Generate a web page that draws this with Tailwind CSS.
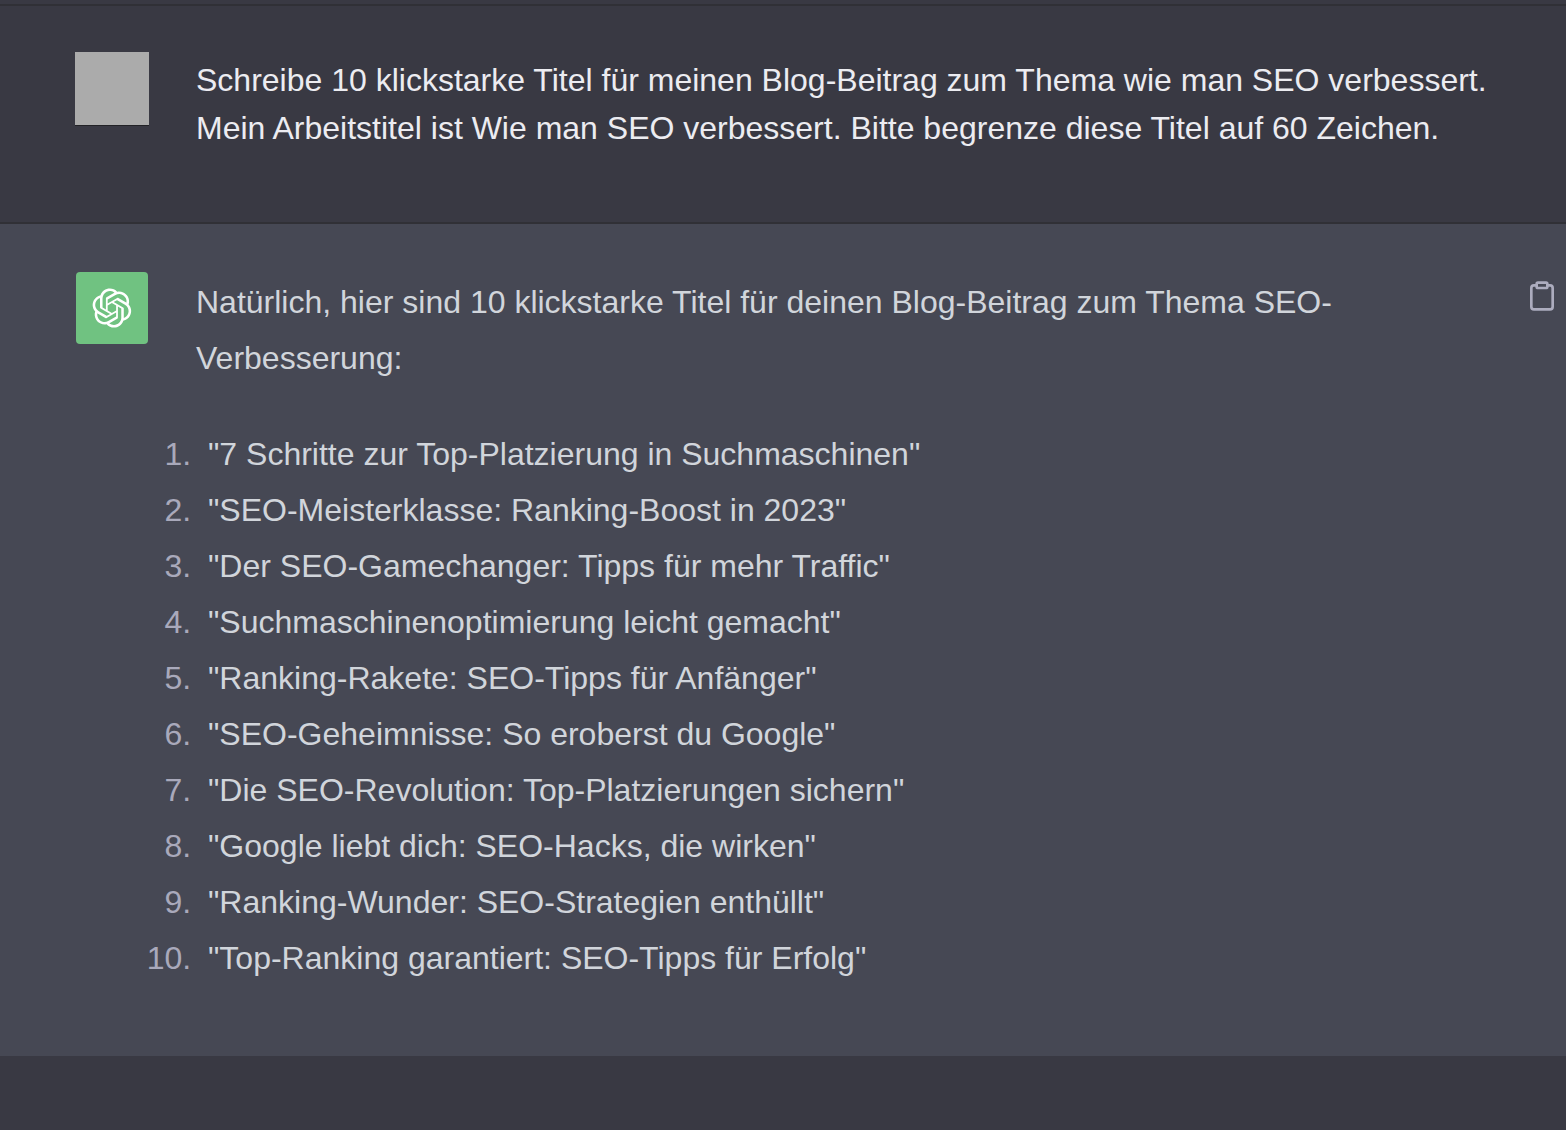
<!DOCTYPE html>
<html lang="de">
<head>
<meta charset="utf-8">
<meta name="viewport" content="width=device-width, initial-scale=1">
<title>Chat</title>
<script src="https://cdn.jsdelivr.net/npm/@tailwindcss/browser@4"></script>
</head>
<body class="min-h-screen bg-[#393943] pt-1 font-['Liberation_Sans',sans-serif] text-[32px] text-[#d1d5db]">
<main>
  <section class="flex items-start gap-12 border-y-2 border-[#303036] px-[76px] pt-[46px] pb-[70px] text-[#ececf1]">
    <div class="-mx-px h-[74px] w-[74px] shrink-0 border-b border-[#222226] bg-[#ababab]"></div>
    <p class="-mr-12 flex-1 pt-1 leading-[48px]">Schreibe 10 klickstarke Titel für meinen Blog-Beitrag zum Thema wie man SEO verbessert. Mein Arbeitstitel ist Wie man SEO verbessert. Bitte begrenze diese Titel auf 60 Zeichen.</p>
  </section>
  <section class="flex items-start bg-[#464854] pt-12 pr-2 pb-[70px] pl-[76px]">
    <div class="flex h-[72px] w-[72px] shrink-0 items-center justify-center rounded-sm bg-[#70c281] text-white">
      <svg class="h-10 w-10" viewBox="0 0 41 41" fill="currentColor" aria-hidden="true"><path d="M37.5324 16.8707C37.9808 15.5241 38.1363 14.0974 37.9886 12.6859C37.8409 11.2744 37.3934 9.91076 36.676 8.68622C35.6126 6.83404 33.9882 5.3676 32.0373 4.4985C30.0864 3.62941 27.9098 3.40259 25.8215 3.85078C24.8796 2.7893 23.7219 1.94125 22.4257 1.36341C21.1295 0.785575 19.7249 0.491269 18.3058 0.500197C16.1708 0.495044 14.0893 1.16803 12.3614 2.42214C10.6335 3.67624 9.34853 5.44666 8.6917 7.47815C7.30085 7.76286 5.98686 8.3414 4.8377 9.17505C3.68854 10.0087 2.73073 11.0782 2.02839 12.312C0.956464 14.1591 0.498905 16.2988 0.721698 18.4228C0.944492 20.5467 1.83612 22.5449 3.268 24.1293C2.81966 25.4759 2.66413 26.9026 2.81182 28.3141C2.95951 29.7256 3.40701 31.0892 4.12437 32.3138C5.18791 34.1659 6.8123 35.6322 8.76321 36.5013C10.7141 37.3704 12.8907 37.5973 14.9789 37.1492C15.9208 38.2107 17.0786 39.0587 18.3747 39.6366C19.6709 40.2144 21.0755 40.5087 22.4946 40.4998C24.6307 40.5054 26.7133 39.8321 28.4418 38.5772C30.1704 37.3223 31.4556 35.5506 32.1119 33.5179C33.5027 33.2332 34.8167 32.6547 35.9659 31.821C37.115 30.9874 38.0728 29.9178 38.7752 28.684C39.8458 26.8371 40.3023 24.6979 40.0789 22.5748C39.8556 20.4517 38.9639 18.4544 37.5324 16.8707ZM22.4978 37.8849C20.7443 37.8874 19.0459 37.2733 17.6994 36.1501C17.7601 36.117 17.8666 36.0586 17.936 36.0161L25.9004 31.4156C26.1003 31.3019 26.2663 31.137 26.3813 30.9378C26.4964 30.7386 26.5563 30.5124 26.5549 30.2825V19.0542L29.9213 20.998C29.9389 21.0068 29.9541 21.0198 29.9656 21.0359C29.977 21.052 29.9842 21.0707 29.9867 21.0902V30.3889C29.9842 32.375 29.1946 34.2791 27.7909 35.6841C26.3872 37.0892 24.4838 37.8806 22.4978 37.8849ZM6.39227 31.0064C5.51397 29.4888 5.19742 27.7107 5.49804 25.9832C5.55718 26.0187 5.66048 26.0818 5.73461 26.1244L13.699 30.7248C13.8975 30.8408 14.1233 30.902 14.3532 30.902C14.583 30.902 14.8088 30.8408 15.0073 30.7248L24.731 25.1103V28.9979C24.7321 29.0177 24.7283 29.0376 24.7199 29.0556C24.7115 29.0736 24.6988 29.0893 24.6829 29.1012L16.6317 33.7497C14.9096 34.7416 12.8643 35.0097 10.9447 34.4954C9.02506 33.9811 7.38785 32.7263 6.39227 31.0064ZM4.29707 13.6194C5.17156 12.0998 6.55279 10.9364 8.19885 10.3327C8.19885 10.4013 8.19491 10.5228 8.19491 10.6071V19.808C8.19351 20.0378 8.25334 20.2638 8.36823 20.4629C8.48312 20.6619 8.64893 20.8267 8.84863 20.9404L18.5723 26.5542L15.206 28.4979C15.1894 28.5089 15.1703 28.5155 15.1505 28.5173C15.1307 28.5191 15.1107 28.516 15.0924 28.5082L7.04046 23.8557C5.32135 22.8601 4.06716 21.2235 3.55289 19.3046C3.03862 17.3858 3.30624 15.3413 4.29707 13.6194ZM31.955 20.0556L22.2312 14.4411L25.5976 12.4981C25.6142 12.4872 25.6333 12.4805 25.6531 12.4787C25.6729 12.4769 25.6928 12.4801 25.7111 12.4879L33.7631 17.1364C34.9967 17.849 36.0017 18.8982 36.6606 20.1613C37.3194 21.4244 37.6047 22.849 37.4832 24.2684C37.3617 25.6878 36.8382 27.0432 35.9743 28.1759C35.1103 29.3086 33.9415 30.1717 32.6047 30.6641C32.6047 30.5947 32.6047 30.4733 32.6047 30.3889V21.188C32.6066 20.9586 32.5474 20.7328 32.4332 20.5338C32.319 20.3348 32.154 20.1698 31.955 20.0556ZM35.3055 15.0128C35.2464 14.9765 35.1431 14.9142 35.069 14.8717L27.1045 10.2712C26.906 10.1554 26.6803 10.0943 26.4504 10.0943C26.2206 10.0943 25.9948 10.1554 25.7963 10.2712L16.0726 15.8858V11.9982C16.0715 11.9783 16.0753 11.9585 16.0837 11.9405C16.0921 11.9225 16.1048 11.9068 16.1207 11.8949L24.1719 7.25025C25.4053 6.53903 26.8158 6.19376 28.2383 6.25482C29.6608 6.31589 31.0364 6.78077 32.2044 7.59508C33.3723 8.40939 34.2842 9.53945 34.8334 10.8531C35.3826 12.1667 35.5464 13.6095 35.3055 15.0128ZM14.2424 21.9419L10.8752 19.9981C10.8576 19.9893 10.8423 19.9763 10.8309 19.9602C10.8195 19.9441 10.8122 19.9254 10.8098 19.9058V10.6071C10.8107 9.18295 11.2173 7.78848 11.9819 6.58696C12.7466 5.38544 13.8377 4.42659 15.1275 3.82264C16.4173 3.21869 17.8524 2.99464 19.2649 3.1767C20.6775 3.35876 22.0089 3.93941 23.1034 4.85067C23.0427 4.88379 22.937 4.94215 22.8668 4.98473L14.9024 9.58517C14.7025 9.69878 14.5366 9.86356 14.4215 10.0626C14.3065 10.2616 14.2466 10.4877 14.2479 10.7175L14.2424 21.9419ZM16.071 17.9991L20.4018 15.4978L24.7325 17.9975V22.9985L20.4018 25.4983L16.071 22.9985V17.9991Z"/></svg>
    </div>
    <div class="ml-12 flex-1 pt-0.5 leading-[56px]">
      <p class="mb-10">Natürlich, hier sind 10 klickstarke Titel für deinen Blog-Beitrag zum Thema SEO-Verbesserung:</p>
      <ol class="list-decimal pl-1 marker:text-[#a9a9bb]">
        <li class="pl-2">"7 Schritte zur Top-Platzierung in Suchmaschinen"</li>
        <li class="pl-2">"SEO-Meisterklasse: Ranking-Boost in 2023"</li>
        <li class="pl-2">"Der SEO-Gamechanger: Tipps für mehr Traffic"</li>
        <li class="pl-2">"Suchmaschinenoptimierung leicht gemacht"</li>
        <li class="pl-2">"Ranking-Rakete: SEO-Tipps für Anfänger"</li>
        <li class="pl-2">"SEO-Geheimnisse: So eroberst du Google"</li>
        <li class="pl-2">"Die SEO-Revolution: Top-Platzierungen sichern"</li>
        <li class="pl-2">"Google liebt dich: SEO-Hacks, die wirken"</li>
        <li class="pl-2">"Ranking-Wunder: SEO-Strategien enthüllt"</li>
        <li class="pl-2">"Top-Ranking garantiert: SEO-Tipps für Erfolg"</li>
      </ol>
    </div>
    <button type="button" aria-label="Kopieren" class="mt-2 ml-[30px] shrink-0 text-[#acacbe]">
      <svg class="block h-8 w-8" viewBox="0 0 24 24" fill="none" stroke="currentColor" stroke-width="2" stroke-linecap="round" stroke-linejoin="round" aria-hidden="true"><path d="M16 4h2a2 2 0 0 1 2 2v14a2 2 0 0 1-2 2H6a2 2 0 0 1-2-2V6a2 2 0 0 1 2-2h2"/><rect x="8" y="2" width="8" height="4" rx="1"/></svg>
    </button>
  </section>
</main>
</body>
</html>
